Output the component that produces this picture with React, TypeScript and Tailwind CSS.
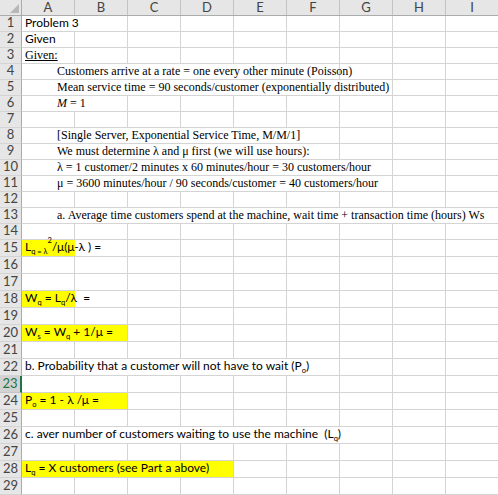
import React from "react";

type Row = {
  n: number;
  content?: React.ReactNode;
  serif?: boolean;
  indent?: boolean;
  span?: number;
  yellow?: number;
};

const Sub = ({ children }: { children: React.ReactNode }) => (
  <sub className="text-[7.5px] align-[-2px] leading-none">{children}</sub>
);
const Sup = ({ children }: { children: React.ReactNode }) => (
  <sup className="text-[7.5px] align-[4px] leading-none">{children}</sup>
);

const rows: Row[] = [
  { n: 1, content: "Problem 3", span: 2 },
  { n: 2, content: "Given" },
  { n: 3, content: <span className="underline">Given:</span>, serif: true },
  { n: 4, content: "Customers arrive at a rate = one every other minute (Poisson)", serif: true, indent: true, span: 6 },
  { n: 5, content: "Mean service time = 90 seconds/customer (exponentially distributed)", serif: true, indent: true, span: 7 },
  { n: 6, content: <><i>M</i> = 1</>, serif: true, indent: true, span: 2 },
  { n: 7 },
  { n: 8, content: "[Single Server, Exponential Service Time, M/M/1]", serif: true, indent: true, span: 6 },
  { n: 9, content: "We must determine λ and μ first (we will use hours):", serif: true, indent: true, span: 6 },
  { n: 10, content: "λ = 1 customer/2 minutes x 60 minutes/hour = 30 customers/hour", serif: true, indent: true, span: 7 },
  { n: 11, content: "μ = 3600 minutes/hour / 90 seconds/customer = 40 customers/hour", serif: true, indent: true, span: 7 },
  { n: 12 },
  { n: 13, content: "a. Average time customers spend at the machine, wait time + transaction time (hours) Ws", serif: true, indent: true, span: 9 },
  { n: 14 },
  { n: 15, content: <>L<Sub>q = λ</Sub><Sup>2</Sup>/μ(μ-λ ) =</>, span: 2, yellow: 1 },
  { n: 16 },
  { n: 17 },
  { n: 18, content: <>W<Sub>q</Sub> = L<Sub>q</Sub>/λ&nbsp;&nbsp;=</>, span: 2, yellow: 1 },
  { n: 19 },
  { n: 20, content: <>W<Sub>s</Sub> = W<Sub>q</Sub> + 1/μ =</>, span: 2, yellow: 2 },
  { n: 21 },
  { n: 22, content: <>b. Probability that a customer will not have to wait (P<Sub>o</Sub>)</>, span: 6 },
  { n: 23 },
  { n: 24, content: <>P<Sub>o</Sub> = 1 - λ /μ =</>, span: 2, yellow: 2 },
  { n: 25 },
  { n: 26, content: <>c. aver number of customers waiting to use the machine&nbsp;&nbsp;(L<Sub>q</Sub>)</>, span: 7 },
  { n: 27 },
  { n: 28, content: <>L<Sub>q</Sub> = X customers (see Part a above)</>, span: 4, yellow: 4 },
  { n: 29 },
];

const cols = ["A", "B", "C", "D", "E", "F", "G", "H", "I"];

export default function App() {
  return (
    <div className="w-[498px] h-[495px] overflow-hidden bg-white select-none">
      {/* column header */}
      <div className="flex h-[16px] bg-[#e6e6e6] border-b border-[#ababab]">
        <div className="relative w-[22px] shrink-0 border-r border-[#ababab]">
          <div className="absolute right-[2px] bottom-[2px] w-0 h-0 border-l-[9px] border-l-transparent border-b-[9px] border-b-[#b7b7b7]" />
        </div>
        {cols.map((c, i) => (
          <div
            key={c}
            className={`${i === 8 ? "flex-1" : "w-[53px] shrink-0 border-r border-[#c4c4c4]"} flex items-center justify-center text-[13px] leading-none text-[#444] font-['Lato',sans-serif]`}
          >
            {c}
          </div>
        ))}
      </div>
      {rows.map((r) => {
        const h = r.n <= 14 ? "h-[16px]" : "h-[17px]";
        const span = r.span ?? 1;
        const yellow = r.yellow ?? 0;
        const sel = r.n === 23;
        return (
          <div key={r.n} className={`flex ${h}`}>
            <div
              className={`w-[22px] shrink-0 flex items-end justify-center pb-[2px] text-[13px] leading-none font-['Lato',sans-serif] border-b ${
                sel
                  ? "bg-[#d2d2d2] text-[#217346] border-r-2 border-r-[#217346] border-b-[#c4c4c4]"
                  : "bg-[#e6e6e6] text-[#444] border-r border-r-[#ababab] border-b-[#d4d4d4]"
              }`}
            >
              {r.n}
            </div>
            {cols.map((c, i) => {
              const internal = i < span - 1;
              const isLast = i === 8;
              return (
                <div
                  key={c}
                  className={`${isLast ? "flex-1" : "w-[53px] shrink-0"} relative border-b border-[#d4d4d4] ${
                    internal || isLast ? "" : "border-r"
                  } ${i < yellow ? "bg-[#ffff00]" : ""}`}
                >
                  {i === 0 && r.content && (
                    <div
                      className={`absolute bottom-0 left-0 z-10 whitespace-nowrap leading-none text-black ${
                        r.serif
                          ? "font-['Liberation_Serif',serif] text-[12px] pb-[2px]"
                          : "font-['Lato',sans-serif] text-[12px] pb-[2px]"
                      } ${r.indent ? "pl-[35px]" : "pl-[3px]"}`}
                    >
                      {r.content}
                    </div>
                  )}
                </div>
              );
            })}
          </div>
        );
      })}
    </div>
  );
}
